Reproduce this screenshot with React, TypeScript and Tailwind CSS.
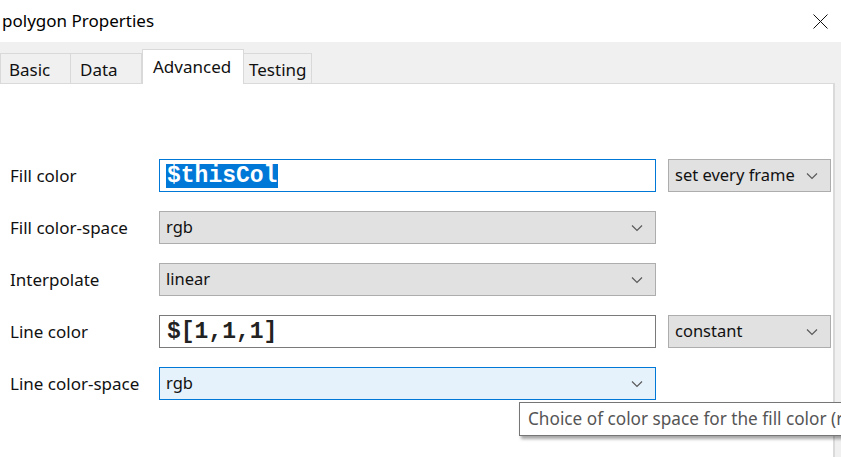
import type { ReactNode } from "react";

const font = { fontFamily: '"Noto Sans", "Open Sans", Arial, sans-serif' };
const mono = { fontFamily: '"Liberation Mono", "Courier New", monospace' };

function Chevron() {
  return (
    <svg width="12" height="8" viewBox="0 0 12 8" className="shrink-0">
      <path d="M1 1.5 L6 6.5 L11 1.5" fill="none" stroke="#5a5a5a" strokeWidth="1.2" />
    </svg>
  );
}

function Select({ value, className }: { value: string; className: string }) {
  return (
    <div className={`flex h-[33px] items-center justify-between border pl-[6px] pr-[12px] text-[16.5px] text-[#111] ${className}`}>
      <span>{value}</span>
      <Chevron />
    </div>
  );
}

function Row({ label, children }: { label: string; children: ReactNode }) {
  return (
    <div className="flex items-center">
      <div className="w-[149px] shrink-0 text-[17px] text-[#111]">{label}</div>
      {children}
    </div>
  );
}

export default function App() {
  return (
    <div className="relative flex h-[457px] w-[841px] flex-col overflow-hidden bg-[#f0f0f0]" style={font}>
      {/* Title bar */}
      <div className="flex h-[42px] shrink-0 items-center justify-between bg-white pl-[2px] pr-[13px]">
        <span className="text-[17px] text-black">polygon Properties</span>
        <svg width="15" height="15" viewBox="0 0 15 15">
          <path d="M0.5 0.5 L14.5 14.5 M14.5 0.5 L0.5 14.5" stroke="#111" strokeWidth="1" />
        </svg>
      </div>

      {/* Tabs */}
      <div className="flex h-[41px] shrink-0 items-end text-[17px] text-[#111]">
        <div className="flex h-[30px] w-[71px] items-center border border-b-0 border-[#d9d9d9] px-[8px] pt-[2px]">Basic</div>
        <div className="flex h-[30px] w-[71px] items-center border border-b-0 border-l-0 border-[#d9d9d9] px-[9px] pt-[2px]">Data</div>
        <div className="relative z-10 -mb-px flex h-[35px] w-[102px] items-start border border-b-0 border-[#d9d9d9] bg-white px-[10px] pt-[4px]">Advanced</div>
        <div className="flex h-[30px] w-[68px] items-center border border-b-0 border-l-0 border-[#d9d9d9] px-[5px] pt-[2px]">Testing</div>
      </div>

      {/* Panel */}
      <div className="mr-[6px] flex flex-1 flex-col gap-[19px] border-t border-r-2 border-[#dadada] bg-white pl-[10px] pt-[75px]">
        <Row label="Fill color">
          <div className="flex h-[33px] w-[497px] items-center border border-[#0078d7] bg-white px-[6px]">
            <span className="bg-[#0078d7] px-px text-[23px] font-bold leading-[24px] text-white" style={mono}>$thisCol</span>
          </div>
          <Select value="set every frame" className="ml-[12px] w-[163px] border-[#adadad] bg-[#e1e1e1]" />
        </Row>
        <Row label="Fill color-space">
          <Select value="rgb" className="w-[497px] border-[#adadad] bg-[#e1e1e1]" />
        </Row>
        <Row label="Interpolate">
          <Select value="linear" className="w-[497px] border-[#adadad] bg-[#e1e1e1]" />
        </Row>
        <Row label="Line color">
          <div className="flex h-[33px] w-[497px] items-center border border-[#7a7a7a] bg-white px-[7px]">
            <span className="text-[23px] font-bold leading-[24px] text-[#222]" style={mono}>$[1,1,1]</span>
          </div>
          <Select value="constant" className="ml-[12px] w-[163px] border-[#adadad] bg-[#e1e1e1]" />
        </Row>
        <Row label="Line color-space">
          <Select value="rgb" className="w-[497px] border-[#0078d7] bg-[#e5f1fb]" />
        </Row>
      </div>

      {/* Tooltip */}
      <div className="absolute left-[519px] top-[402px] whitespace-nowrap border border-[#767676] bg-white px-[8px] py-[3px] text-[17.2px] text-[#555] shadow-[2px_3px_3px_rgba(0,0,0,0.35)]">
        Choice of color space for the fill color (rgb)
      </div>
    </div>
  );
}
